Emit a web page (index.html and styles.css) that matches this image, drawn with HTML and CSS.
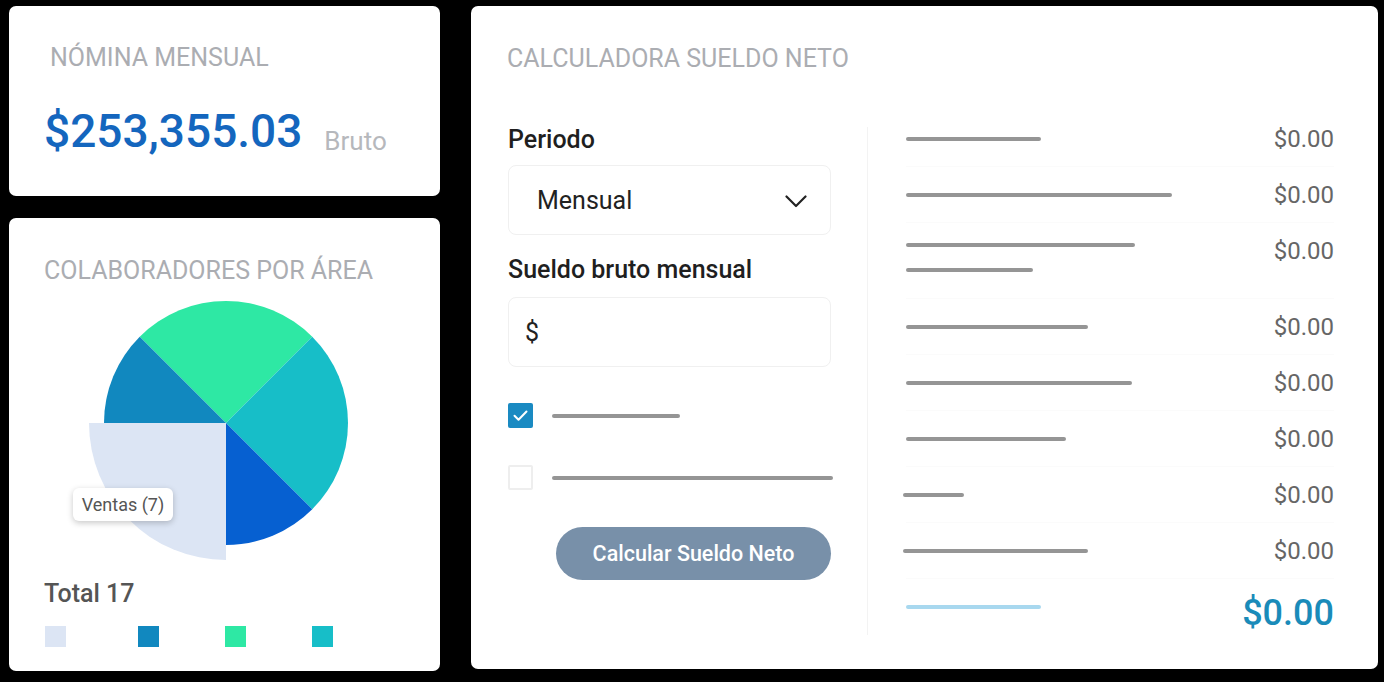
FILE: index.html
```html
<!DOCTYPE html>
<html lang="es">
<head>
<meta charset="utf-8">
<title>Nómina</title>
<link rel="stylesheet" href="styles.css">
</head>
<body>
<div class="board">
  <div class="col-left">
    <section class="card card-payroll">
      <h2 class="card-title title-payroll">NÓMINA MENSUAL</h2>
      <div class="payroll-value">
        <span class="amount-big">$253,355.03</span>
        <span class="amount-tag">Bruto</span>
      </div>
    </section>
    <section class="card card-areas">
      <h2 class="card-title">COLABORADORES POR ÁREA</h2>
      <div class="chart">
        <svg class="pie" width="280" height="280" viewBox="0 0 280 280">
          <path d="M146 137 L59.73 50.73 A122 122 0 0 1 232.27 50.73 Z" fill="#2ee8a4"/>
          <path d="M146 137 L232.27 50.73 A122 122 0 0 1 232.27 223.27 Z" fill="#17bec8"/>
          <path d="M146 137 L232.27 223.27 A122 122 0 0 1 146 259 Z" fill="#0660d1"/>
          <path d="M146 137 L24 137 A122 122 0 0 1 59.73 50.73 Z" fill="#1188bf"/>
          <path d="M146 137 L146 274 A137 137 0 0 1 9 137 Z" fill="#dce5f4"/>
        </svg>
        <div class="tooltip">Ventas (7)</div>
      </div>
      <div class="total">Total 17</div>
      <div class="legend">
        <span class="swatch sw-light"></span>
        <span class="swatch sw-dark"></span>
        <span class="swatch sw-green"></span>
        <span class="swatch sw-teal"></span>
      </div>
    </section>
  </div>

  <section class="card card-calc">
    <h2 class="card-title">CALCULADORA SUELDO NETO</h2>
    <div class="calc-body">
      <div class="calc-form">
        <div class="field-label">Periodo</div>
        <div class="select-box">
          <span class="select-value">Mensual</span>
          <svg class="chevron" width="22" height="13" viewBox="0 0 22 13"><polyline points="1.5,1.5 11,11 20.5,1.5" fill="none" stroke="#222" stroke-width="2.2" stroke-linecap="round" stroke-linejoin="round"/></svg>
        </div>
        <div class="field-label label-gap">Sueldo bruto mensual</div>
        <div class="input-box"><span class="currency">$</span></div>
        <div class="check-row check-first">
          <span class="checkbox checked"><svg width="25" height="25" viewBox="0 0 25 25"><polyline points="6.5,12.8 10.5,16.8 18.5,8.5" fill="none" stroke="#fff" stroke-width="2" stroke-linecap="round" stroke-linejoin="round"/></svg></span>
          <span class="skeleton" style="width:128px"></span>
        </div>
        <div class="check-row check-second">
          <span class="checkbox"></span>
          <span class="skeleton" style="width:281px"></span>
        </div>
        <button class="btn-calc" type="button">Calcular Sueldo Neto</button>
      </div>
      <div class="divider"></div>
      <div class="calc-results">
        <div class="result-row"><span class="skeleton" style="width:135px"></span><span class="amount">$0.00</span></div>
        <div class="result-row"><span class="skeleton" style="width:266px"></span><span class="amount">$0.00</span></div>
        <div class="result-row row-double">
          <div class="double-lines"><span class="skeleton" style="width:229px"></span><span class="skeleton" style="width:127px"></span></div>
          <span class="amount">$0.00</span>
        </div>
        <div class="result-row"><span class="skeleton" style="width:182px"></span><span class="amount">$0.00</span></div>
        <div class="result-row"><span class="skeleton" style="width:226px"></span><span class="amount">$0.00</span></div>
        <div class="result-row"><span class="skeleton" style="width:160px"></span><span class="amount">$0.00</span></div>
        <div class="result-row"><span class="skeleton shift" style="width:61px"></span><span class="amount">$0.00</span></div>
        <div class="result-row"><span class="skeleton shift" style="width:185px"></span><span class="amount">$0.00</span></div>
        <div class="result-row row-total"><span class="skeleton skeleton-blue" style="width:135px"></span><span class="amount-total">$0.00</span></div>
      </div>
    </div>
  </section>
</div>
</body>
</html>
```

FILE: styles.css
```css
* { box-sizing: border-box; }

html, body {
  margin: 0;
  padding: 0;
  background: #000;
  font-family: Roboto, "Liberation Sans", Arial, sans-serif;
}

.board {
  display: flex;
  align-items: flex-start;
  gap: 31px;
  padding: 6px 0 0 9px;
  width: 1384px;
  height: 682px;
}

.col-left {
  display: flex;
  flex-direction: column;
  gap: 22px;
  width: 431px;
}

.card {
  background: #fff;
  border-radius: 7px;
}

.card-title {
  margin: 0;
  font-size: 25px;
  line-height: 30px;
  font-weight: 400;
  color: #abadb2;
  white-space: nowrap;
}

/* Payroll card */
.card-payroll {
  height: 190px;
  padding: 37px 20px 0 35px;
}

.title-payroll {
  margin-left: 6px;
}

.payroll-value {
  margin-top: 31px;
  line-height: 54px;
  white-space: nowrap;
}

.amount-big {
  font-size: 46px;
  font-weight: 500;
  color: #1466be;
}

.amount-tag {
  margin-left: 18px;
  font-size: 26px;
  color: #b6b8bc;
  vertical-align: -3px;
}

/* Areas card */
.card-areas {
  height: 453px;
  padding: 38px 20px 0 35px;
}

.chart {
  position: relative;
  width: 280px;
  height: 280px;
  margin: 0 0 0 36px;
}

.pie {
  display: block;
}

.tooltip {
  position: absolute;
  left: -7px;
  top: 202px;
  width: 100px;
  height: 33px;
  display: flex;
  align-items: center;
  justify-content: center;
  background: #fff;
  border-radius: 6px;
  box-shadow: 0 2px 6px rgba(0, 0, 0, 0.22);
  font-size: 18px;
  color: #555;
}

.total {
  margin-top: 13px;
  font-size: 25px;
  line-height: 30px;
  font-weight: 500;
  color: #555;
}

.legend {
  display: grid;
  grid-template-columns: 93px 87px 87px 21px;
  margin-top: 17px;
  margin-left: 1px;
}

.swatch {
  display: block;
  width: 21px;
  height: 21px;
}

.sw-light { background: #dce5f4; }
.sw-dark { background: #1188bf; }
.sw-green { background: #2ee8a4; }
.sw-teal { background: #17bec8; }

/* Calculator card */
.card-calc {
  width: 907px;
  height: 663px;
  padding: 38px 44px 0 36px;
}

.calc-body {
  display: flex;
  align-items: flex-start;
  margin-top: 37px;
}

.calc-form {
  width: 323px;
  display: flex;
  flex-direction: column;
  padding-top: 14px;
  margin-left: 1px;
}

.field-label {
  font-size: 25px;
  line-height: 30px;
  font-weight: 500;
  color: #1f1f1f;
}

.label-gap {
  margin-top: 20px;
}

.select-box {
  margin-top: 10px;
  height: 70px;
  border: 1px solid #f0f0f0;
  border-radius: 8px;
  display: flex;
  align-items: center;
  justify-content: space-between;
  padding: 0 23px 0 28px;
}

.select-value {
  font-size: 25px;
  color: #222;
}

.chevron {
  display: block;
  margin-top: 2px;
}

.input-box {
  margin-top: 12px;
  height: 70px;
  border: 1px solid #f0f0f0;
  border-radius: 8px;
  display: flex;
  align-items: center;
  padding-left: 16px;
}

.currency {
  font-size: 25px;
  color: #222;
}

.check-row {
  display: flex;
  align-items: center;
  gap: 19px;
  height: 25px;
}

.check-first { margin-top: 36px; }
.check-second { margin-top: 37px; }

.checkbox {
  display: block;
  width: 25px;
  height: 25px;
  border: 2px solid #eeeeee;
  border-radius: 2px;
  flex: none;
}

.checkbox.checked {
  border: none;
  background: #1a8ac2;
}

.checkbox svg { display: block; }

.skeleton {
  display: block;
  height: 4px;
  border-radius: 2px;
  background: #959595;
  flex: none;
}

.skeleton-blue {
  background: #a8d8ef;
}

.shift {
  margin-left: -3px;
}

.btn-calc {
  align-self: flex-end;
  margin-top: 37px;
  width: 275px;
  height: 53px;
  border: none;
  border-radius: 27px;
  background: #7890a9;
  color: #fff;
  font-family: Roboto, "Liberation Sans", Arial, sans-serif;
  font-size: 21.5px;
  font-weight: 500;
  padding: 0;
}

.divider {
  width: 1px;
  height: 508px;
  margin: 16px 0 0 36px;
  background: #f3f3f3;
  flex: none;
}

.calc-results {
  flex: 1;
  padding-left: 38px;
  padding-top: 0;
}

.result-row {
  display: flex;
  align-items: center;
  justify-content: space-between;
  height: 56px;
  border-bottom: 1px solid #fbfbfb;
}

.amount {
  font-size: 24px;
  line-height: 28px;
  color: #666;
}

.row-double {
  height: 76px;
  align-items: flex-start;
}

.row-double .amount {
  margin-top: 14px;
}

.double-lines {
  display: flex;
  flex-direction: column;
  gap: 21px;
  padding-top: 20px;
}

.row-total {
  height: 68px;
  align-items: flex-start;
  border-bottom: none;
}

.row-total .skeleton {
  margin-top: 26px;
}

.amount-total {
  margin-top: 13px;
  font-size: 36px;
  line-height: 42px;
  font-weight: 500;
  color: #1a8bb9;
}
```
